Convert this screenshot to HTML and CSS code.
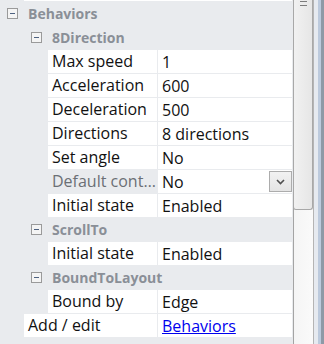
FILE: index.html
```html
<!DOCTYPE html>
<html>
<head>
  <meta charset="utf-8">
  <title>Properties - Behaviors</title>
  <link rel="stylesheet" href="styles.css">
</head>
<body>
  <div class="panel">
    <div class="grid">
      <div class="stub"></div>

      <div class="group depth-0">
        <svg class="toggle" width="11" height="11" viewBox="0 0 11 11"><rect x="0.5" y="0.5" width="10" height="10" fill="#f4f4f4" stroke="#9a9a9a"/><line x1="3" y1="5.5" x2="8" y2="5.5" stroke="#4d6180"/></svg>
        <span>Behaviors</span>
      </div>

      <div class="group depth-1">
        <svg class="toggle" width="11" height="11" viewBox="0 0 11 11"><rect x="0.5" y="0.5" width="10" height="10" fill="#f4f4f4" stroke="#9a9a9a"/><line x1="3" y1="5.5" x2="8" y2="5.5" stroke="#4d6180"/></svg>
        <span>8Direction</span>
      </div>
      <div class="prop depth-2"><div class="name">Max speed</div><div class="value">1</div></div>
      <div class="prop depth-2"><div class="name">Acceleration</div><div class="value">600</div></div>
      <div class="prop depth-2"><div class="name">Deceleration</div><div class="value">500</div></div>
      <div class="prop depth-2"><div class="name">Directions</div><div class="value">8 directions</div></div>
      <div class="prop depth-2"><div class="name">Set angle</div><div class="value">No</div></div>
      <div class="prop depth-2">
        <div class="name muted">Default controls</div>
        <div class="value">
          <span>No</span>
          <span class="drop">
            <svg width="9" height="6" viewBox="0 0 9 6"><path d="M1 1 L4.5 4.5 L8 1" fill="none" stroke="#505050" stroke-width="1.6"/></svg>
          </span>
        </div>
      </div>
      <div class="prop depth-2"><div class="name">Initial state</div><div class="value">Enabled</div></div>

      <div class="group depth-1">
        <svg class="toggle" width="11" height="11" viewBox="0 0 11 11"><rect x="0.5" y="0.5" width="10" height="10" fill="#f4f4f4" stroke="#9a9a9a"/><line x1="3" y1="5.5" x2="8" y2="5.5" stroke="#4d6180"/></svg>
        <span>ScrollTo</span>
      </div>
      <div class="prop depth-2"><div class="name">Initial state</div><div class="value">Enabled</div></div>

      <div class="group depth-1">
        <svg class="toggle" width="11" height="11" viewBox="0 0 11 11"><rect x="0.5" y="0.5" width="10" height="10" fill="#f4f4f4" stroke="#9a9a9a"/><line x1="3" y1="5.5" x2="8" y2="5.5" stroke="#4d6180"/></svg>
        <span>BoundToLayout</span>
      </div>
      <div class="prop depth-2"><div class="name">Bound by</div><div class="value">Edge</div></div>

      <div class="prop depth-1"><div class="name">Add / edit</div><div class="value"><a href="#">Behaviors</a></div></div>
    </div>

    <div class="scrollbar">
      <div class="thumb">
        <span class="grip"></span>
      </div>
    </div>

    <div class="frame">
      <span class="edge-a"></span>
      <span class="edge-b"></span>
      <span class="edge-c"></span>
      <span class="edge-d"></span>
    </div>
  </div>
</body>
</html>
```

FILE: styles.css
```css
/* Property grid look */
body {
  margin: 0;
  font-family: "Open Sans", "Noto Sans", sans-serif;
  font-size: 16px;
  background-color: #e9ebee;
  color: #111;
}
.panel {
  display: flex;
  height: 344px;
  overflow: hidden;
}
.grid {
  width: 293px;
  display: flex;
  flex-direction: column;
  gap: 1px;
}
.stub {
  height: 1px;
  margin-left: 24px;
  margin-right: 1px;
  background-color: #fff;
}
.group {
  height: 23px;
  display: flex;
  align-items: center;
  font-weight: bold;
  font-size: 14px;
  color: #8a8f97;
}
.group.depth-0 {
  padding-left: 7px;
}
.group.depth-1 {
  padding-left: 31px;
}
.toggle {
  margin-right: 10px;
  flex: none;
}
.prop {
  height: 23px;
  display: flex;
  gap: 1px;
  margin-right: 1px;
}
.prop.depth-2 {
  margin-left: 48px;
}
.prop.depth-1 {
  margin-left: 24px;
}
.name, .value {
  background-color: #fff;
  display: flex;
  align-items: center;
  padding-left: 4px;
  white-space: nowrap;
  overflow: hidden;
}
.prop.depth-2 .name {
  width: 105px;
}
.prop.depth-1 .name {
  width: 129px;
}
.name {
  text-overflow: ellipsis;
  display: block;
  line-height: 23px;
}
.name.muted {
  background-color: #e9ebee;
  color: #6b6f75;
}
.value {
  flex: 1;
  position: relative;
}
.value a {
  color: #0000ee;
}
.drop {
  position: absolute;
  right: 0;
  top: 1px;
  width: 21px;
  height: 19px;
  border: 1px solid #acacac;
  background: linear-gradient(#f2f2f2, #e4e4e4);
  display: flex;
  align-items: center;
  justify-content: center;
}
.scrollbar {
  width: 19px;
  border-left: 1px solid #a4a4a4;
  background: linear-gradient(to right, #f5f5f5, #fafafa);
}
.thumb {
  height: 211px;
  margin-top: -2px;
  border: 1px solid #a8a8a8;
  border-top: none;
  border-radius: 0 0 3px 3px;
  background: linear-gradient(to right, #f1f1f1, #e6e6e6);
  margin-left: -1px;
  display: flex;
  justify-content: center;
}
.grip {
  width: 7px;
  height: 3px;
  margin-top: 3px;
  border-top: 1px solid #7c7c7c;
  border-bottom: 1px solid #7c7c7c;
}
.frame {
  display: flex;
  flex: 1;
}
.edge-a {
  width: 1px;
  background-color: #b4b4b4;
}
.edge-b {
  width: 4px;
  background-color: #e6eaf0;
}
.edge-c {
  width: 3px;
  background-color: #bccadd;
}
.edge-d {
  flex: 1;
  background-color: #8e99a6;
}
```
